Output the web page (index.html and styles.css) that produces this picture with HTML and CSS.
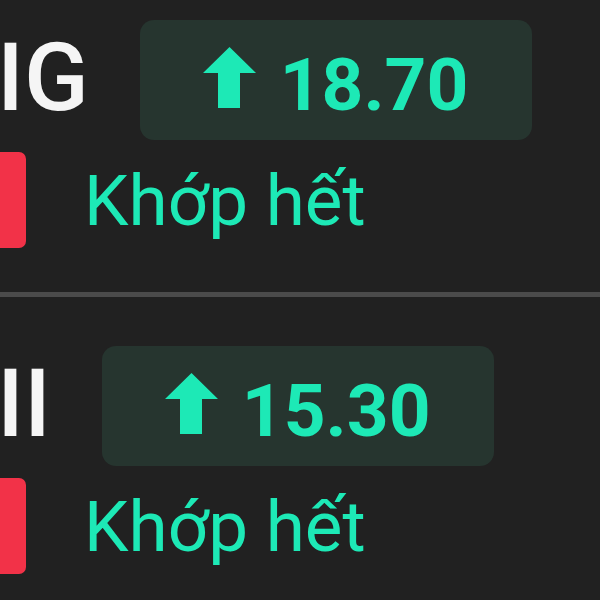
FILE: index.html
```html
<!DOCTYPE html>
<html>
<head>
    <title>Lệnh khớp</title>
    <link rel="stylesheet" href="styles.css">
</head>
<body>
    <div class="order-list">
        <div class="order-row">
            <div class="order-top">
                <span class="ticker">IG</span>
                <div class="price-pill">
                    <svg class="arrow-up" viewBox="0 0 53 61" width="53" height="61">
                        <polygon points="0,26 26.5,0 53,26 37,26 37,61 15,61 15,26" fill="#1de9b6"/>
                    </svg>
                    <span class="price">18.70</span>
                </div>
            </div>
            <div class="order-bottom">
                <div class="side-tag"></div>
                <span class="status">Khớp hết</span>
            </div>
        </div>
        <div class="order-row">
            <div class="order-top">
                <span class="ticker">II</span>
                <div class="price-pill">
                    <svg class="arrow-up" viewBox="0 0 53 61" width="53" height="61">
                        <polygon points="0,26 26.5,0 53,26 37,26 37,61 15,61 15,26" fill="#1de9b6"/>
                    </svg>
                    <span class="price">15.30</span>
                </div>
            </div>
            <div class="order-bottom">
                <div class="side-tag"></div>
                <span class="status">Khớp hết</span>
            </div>
        </div>
    </div>
</body>
</html>
```

FILE: styles.css
```css
* {
    margin: 0;
    padding: 0;
    box-sizing: border-box;
}

body {
    font-family: Roboto, 'Noto Sans', sans-serif;
    background: #212121;
    color: #f5f5f5;
    overflow: hidden;
}

.order-list {
    margin-top: -29px;
}

.order-row {
    padding: 49px 0 44px;
    border-bottom: 5px solid #4b4b4b;
}

.order-top {
    display: flex;
    align-items: center;
    height: 120px;
}

.ticker {
    font-size: 95px;
    font-weight: 500;
    line-height: 1;
    margin-left: -3px;
    margin-bottom: 5px;
    margin-right: 51px;
    color: #f5f5f5;
}

.price-pill {
    display: flex;
    align-items: center;
    width: 392px;
    height: 120px;
    padding-left: 63px;
    background: #26352f;
    border-radius: 14px;
}

.arrow-up {
    display: block;
    margin-bottom: 5px;
    margin-right: 24px;
}

.price {
    font-size: 73px;
    font-weight: 700;
    line-height: 1;
    margin-top: 10px;
    color: #1de9b6;
}

.order-bottom {
    display: flex;
    align-items: center;
    margin-top: 12px;
    height: 96px;
}

.side-tag {
    width: 40px;
    height: 96px;
    margin-left: -14px;
    background: #f23248;
    border-radius: 7px;
}

.status {
    font-size: 71px;
    line-height: 1;
    margin-left: 58px;
    color: #1de9b6;
}
```
